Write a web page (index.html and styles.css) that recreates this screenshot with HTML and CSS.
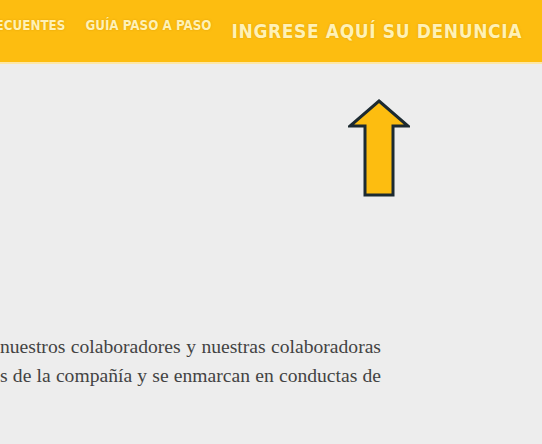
FILE: index.html
```html
<!DOCTYPE html>
<html lang="es">
<head>
<meta charset="utf-8">
<title>Denuncias</title>
<link rel="stylesheet" href="styles.css">
</head>
<body>
<header class="topbar">
  <nav class="nav">
    <a class="nav-item" href="#">PREGUNTAS FRECUENTES</a>
    <a class="nav-item" href="#">GUÍA PASO A PASO</a>
    <a class="nav-item nav-cta" href="#">INGRESE AQUÍ SU DENUNCIA</a>
  </nav>
</header>
<main class="content">
  <div class="pointer">
    <svg class="arrow" width="62" height="100" viewBox="0 0 62 100" aria-hidden="true">
      <path d="M31 3 L60 28 L45 28 L45 97 L17 97 L17 28 L2 28 Z" fill="#fdbd10" stroke="#1c2a31" stroke-width="3" stroke-linejoin="miter"/>
    </svg>
  </div>
  <div class="text">
    <p class="line">nuestros colaboradores y nuestras colaboradoras</p>
    <p class="line">s de la compañía y se enmarcan en conductas de</p>
    <p class="line line-next">s mediante este canal podrán ser denunciados</p>
  </div>
</main>
</body>
</html>
```
FILE: styles.css
```css
html, body {
  margin: 0;
  padding: 0;
}
body {
  background: #ededed;
  width: 542px;
  height: 444px;
  overflow: hidden;
}
.topbar {
  height: 62px;
  background: #fdbd10;
  border-bottom: 2px solid #fde7a6;
  overflow: hidden;
}
.nav {
  display: flex;
  justify-content: flex-end;
  align-items: flex-start;
  height: 100%;
  padding-right: 21px;
  box-sizing: border-box;
  white-space: nowrap;
  gap: 20px;
}
.nav-item {
  font-family: "DejaVu Sans", sans-serif;
  font-stretch: condensed;
  font-weight: bold;
  font-size: 13.3px;
  color: #fff1b5;
  text-decoration: none;
  text-shadow: 0 0 2px rgba(200, 140, 0, 0.6);
  line-height: 1;
  padding-top: 19px;
  flex: none;
}
.nav-cta {
  font-size: 19px;
  letter-spacing: 0.6px;
  padding-top: 22px;
  margin-right: -1px;
}
.content {
  position: relative;
}
.pointer {
  padding-top: 34px;
  padding-left: 348px;
  height: 100px;
}
.arrow {
  display: block;
}
.text {
  width: 381px;
  margin-top: 134px;
  font-family: "Liberation Serif", "Times New Roman", serif;
  font-size: 19.6px;
  color: #434343;
}
.line {
  margin: 0;
  line-height: 29px;
  text-align: justify;
  text-align-last: justify;
  white-space: nowrap;
}
.line-next {
  margin-top: 50px;
  text-align-last: left;
  color: #6a6a6a;
}
```
